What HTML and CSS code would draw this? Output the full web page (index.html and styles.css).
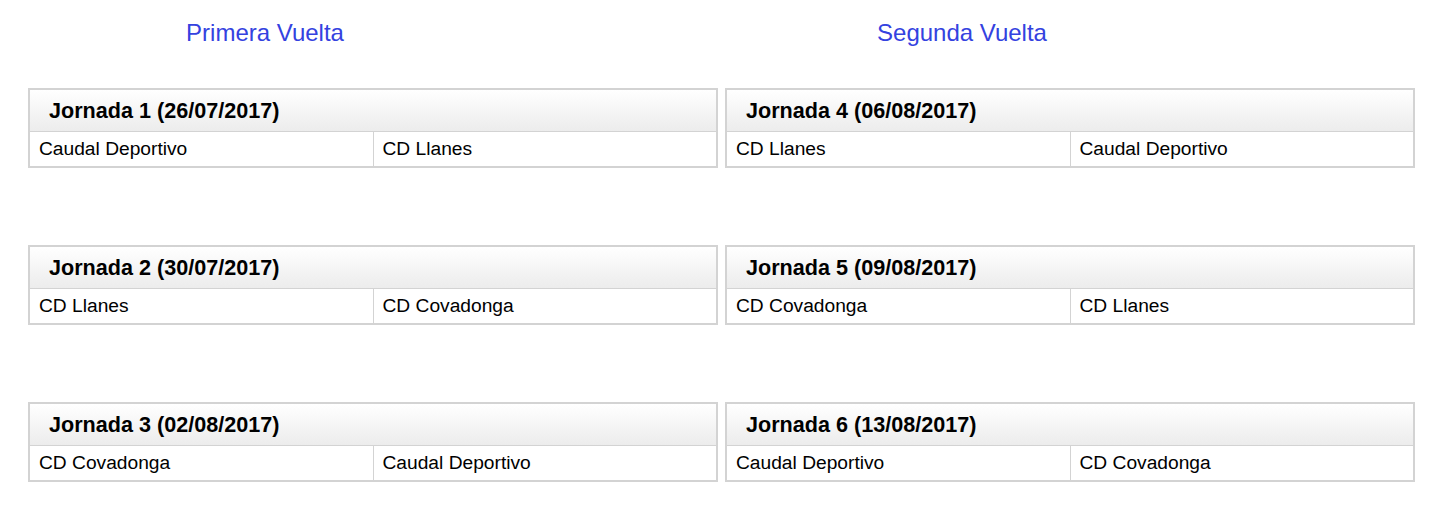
FILE: index.html
```html
<!DOCTYPE html>
<html>
<head>
    <meta charset="utf-8">
    <title>Calendario</title>
    <link rel="stylesheet" href="styles.css">
</head>
<body>
    <div class="vueltas">
        <section class="vuelta">
            <h2 class="vuelta-title">Primera Vuelta</h2>
            <table class="jornada">
                <tr><th colspan="2">Jornada 1 (26/07/2017)</th></tr>
                <tr><td>Caudal Deportivo</td><td>CD Llanes</td></tr>
            </table>
            <table class="jornada">
                <tr><th colspan="2">Jornada 2 (30/07/2017)</th></tr>
                <tr><td>CD Llanes</td><td>CD Covadonga</td></tr>
            </table>
            <table class="jornada">
                <tr><th colspan="2">Jornada 3 (02/08/2017)</th></tr>
                <tr><td>CD Covadonga</td><td>Caudal Deportivo</td></tr>
            </table>
        </section>
        <section class="vuelta">
            <h2 class="vuelta-title">Segunda Vuelta</h2>
            <table class="jornada">
                <tr><th colspan="2">Jornada 4 (06/08/2017)</th></tr>
                <tr><td>CD Llanes</td><td>Caudal Deportivo</td></tr>
            </table>
            <table class="jornada">
                <tr><th colspan="2">Jornada 5 (09/08/2017)</th></tr>
                <tr><td>CD Covadonga</td><td>CD Llanes</td></tr>
            </table>
            <table class="jornada">
                <tr><th colspan="2">Jornada 6 (13/08/2017)</th></tr>
                <tr><td>Caudal Deportivo</td><td>CD Covadonga</td></tr>
            </table>
        </section>
    </div>
</body>
</html>
```
FILE: styles.css
```css
body {
    margin: 0;
    font-family: "Liberation Sans", Arial, sans-serif;
    color: #000;
    background: #fff;
}
.vueltas {
    display: grid;
    grid-template-columns: 690px 690px;
    column-gap: 7px;
    padding: 19px 0 0 28px;
}
.vuelta-title {
    width: 474px;
    margin: 0 0 41px 0;
    font-size: 24px;
    font-weight: normal;
    line-height: 28px;
    text-align: center;
    color: #3442e0;
}
table.jornada {
    width: 100%;
    border-collapse: collapse;
    border: 2px solid #d3d3d3;
    margin-bottom: 77px;
    table-layout: fixed;
}
table.jornada:last-child {
    margin-bottom: 0;
}
.jornada th {
    padding: 8px 19px;
    font-size: 21.6px;
    line-height: 25px;
    font-weight: bold;
    text-align: left;
    background: linear-gradient(#ffffff, #ececec);
    border: 1px solid #d3d3d3;
}
.jornada td {
    width: 50%;
    padding: 6px 9px;
    font-size: 19.2px;
    line-height: 22px;
    border: 1px solid #d3d3d3;
}
```
